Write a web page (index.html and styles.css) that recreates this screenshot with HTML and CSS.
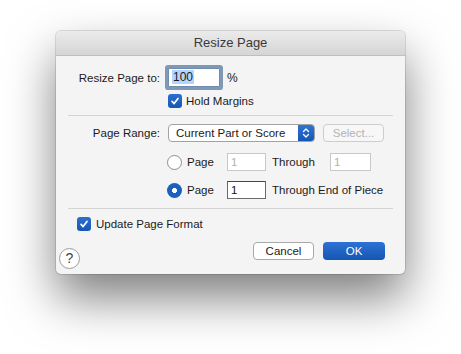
FILE: index.html
```html
<!DOCTYPE html>
<html lang="en">
<head>
    <meta charset="UTF-8">
    <title>Resize Page</title>
    <link rel="stylesheet" href="styles.css">
</head>
<body>

    <div class="window">
        <div class="titlebar">Resize Page</div>

        <div class="content">
            <div class="row row-size">
                <label class="label">Resize Page to:</label>
                <div class="controls">
                    <span class="field field-focus"><span class="sel">100</span></span>
                    <span class="unit">%</span>
                </div>
            </div>

            <div class="row row-check">
                <span></span>
                <div class="controls">
                    <span class="checkbox">
                        <svg width="10" height="10" viewBox="0 0 10 10"><path d="M2 5.3 L4.1 7.6 L8 2.4" fill="none" stroke="#fff" stroke-width="1.7" stroke-linecap="round" stroke-linejoin="round"/></svg>
                    </span>
                    <span>Hold Margins</span>
                </div>
            </div>

            <hr class="sep sep-1">

            <div class="row row-range">
                <label class="label">Page Range:</label>
                <div class="controls">
                    <span class="popup">
                        <span class="popup-text">Current Part or Score</span>
                        <span class="popup-arrows">
                            <svg width="8" height="12" viewBox="0 0 8 12"><path d="M1.5 4.5 L4 2 L6.5 4.5 M1.5 7.5 L4 10 L6.5 7.5" fill="none" stroke="#fff" stroke-width="1.3" stroke-linecap="round" stroke-linejoin="round"/></svg>
                        </span>
                    </span>
                    <span class="btn btn-disabled">Select...</span>
                </div>
            </div>

            <div class="row row-radio row-radio-1">
                <span></span>
                <div class="controls">
                    <span class="radio"></span>
                    <span class="radio-label">Page</span>
                    <span class="field field-small field-disabled">1</span>
                    <span class="through">Through</span>
                    <span class="field field-small2 field-disabled">1</span>
                </div>
            </div>

            <div class="row row-radio row-radio-2">
                <span></span>
                <div class="controls">
                    <span class="radio radio-on"></span>
                    <span class="radio-label">Page</span>
                    <span class="field field-small field-dark">1</span>
                    <span class="through">Through End of Piece</span>
                </div>
            </div>

            <hr class="sep sep-2">

            <div class="row-update">
                <span class="checkbox">
                    <svg width="10" height="10" viewBox="0 0 10 10"><path d="M2 5.3 L4.1 7.6 L8 2.4" fill="none" stroke="#fff" stroke-width="1.7" stroke-linecap="round" stroke-linejoin="round"/></svg>
                </span>
                <span>Update Page Format</span>
            </div>
        </div>

        <div class="footer">
            <span class="help">?</span>
            <span class="spacer"></span>
            <span class="btn btn-cancel">Cancel</span>
            <span class="btn btn-ok">OK</span>
        </div>
    </div>

</body>
</html>
```

FILE: styles.css
```css
html {
    background-color: #fff;
}
body {
    margin: 0;
    padding: 31px 0 0 56px;
    height: 354px;
    box-sizing: border-box;
    font-family: "Liberation Sans", Arial, sans-serif;
    font-size: 11.5px;
    color: #1b1b1b;
}
.window {
    width: 349px;
    height: 243px;
    background-color: #f4f4f4;
    border-radius: 5px;
    box-shadow: 0 24px 48px rgba(0, 0, 0, 0.5), 0 0 0 1px rgba(0, 0, 0, 0.12);
    overflow: hidden;
}
.titlebar {
    height: 24px;
    line-height: 24px;
    text-align: center;
    font-size: 13px;
    color: #3a3a3a;
    background: linear-gradient(#ebebeb, #d5d5d5);
    border-bottom: 1px solid #bfbfbf;
}
.content {
    padding: 0 12px;
}
.row {
    display: grid;
    grid-template-columns: 92px auto;
    column-gap: 8px;
    align-items: center;
}
.label {
    text-align: right;
}
.controls {
    display: flex;
    align-items: center;
}
.row-size {
    margin-top: 12px;
    height: 19px;
}
.row-check {
    margin-top: 6px;
    height: 16px;
}
.row-check .checkbox {
    margin-right: 4px;
}
.sep {
    border: none;
    border-top: 1px solid #d4d4d4;
    margin: 0;
}
.sep-1 {
    margin-top: 6px;
}
.sep-2 {
    margin-top: 9px;
}
.row-range {
    margin-top: 8px;
    height: 18px;
}
.row-radio-1 {
    margin-top: 11px;
    height: 18px;
}
.row-radio-2 {
    margin-top: 10px;
    height: 18px;
}
.row-update {
    margin-top: 7px;
    margin-left: 9px;
    height: 16px;
    display: flex;
    align-items: center;
}
.row-update .checkbox {
    margin-right: 5px;
}

.field {
    box-sizing: border-box;
    display: inline-block;
    background-color: #fff;
    border: 1px solid #a8a8a8;
    height: 18px;
    line-height: 16px;
    padding: 0 3px;
}
.field-focus {
    width: 52px;
    height: 19px;
    line-height: 17px;
    border-color: #6f8dac;
    box-shadow: 0 0 0 3px #7f98b5;
    border-radius: 1px;
    margin-right: 7px;
}
.sel {
    background-color: #b4d5fe;
    padding: 0 1px;
    font-size: 12px;
}
.unit {
    font-size: 12px;
}
.checkbox {
    box-sizing: border-box;
    display: inline-flex;
    align-items: center;
    justify-content: center;
    width: 14px;
    height: 14px;
    border-radius: 3px;
    background: linear-gradient(#2c6fd0, #1557b5);
}

.popup {
    box-sizing: border-box;
    display: flex;
    width: 147px;
    height: 18px;
    border: 1px solid #a2a2a2;
    border-radius: 4px;
    background-color: #fff;
    overflow: hidden;
}
.popup-text {
    flex: 1;
    padding-left: 7px;
    line-height: 16px;
}
.popup-arrows {
    width: 16px;
    display: flex;
    align-items: center;
    justify-content: center;
    background: linear-gradient(#2f74d6, #1556b4);
}
.btn {
    box-sizing: border-box;
    display: inline-flex;
    align-items: center;
    justify-content: center;
    height: 18px;
    border-radius: 4px;
}
.btn-disabled {
    width: 61px;
    margin-left: 8px;
    border: 1px solid #cdcdcd;
    background-color: #f7f7f7;
    color: #b3b3b3;
}

.radio {
    box-sizing: border-box;
    width: 15px;
    height: 15px;
    border-radius: 50%;
    border: 1px solid #8e8e8e;
    background-color: #fff;
    margin-left: -1px;
}
.radio-on {
    border: none;
    background: radial-gradient(circle, #fff 0 2.2px, #1b5fbf 2.8px);
}
.radio-label {
    margin-left: 5px;
    width: 40px;
}
.field-small {
    width: 39px;
}
.field-small2 {
    width: 41px;
}
.field-disabled {
    color: #b0b0b0;
    border-color: #c8c8c8;
}
.field-dark {
    border-color: #6a6a6a;
    border-top-color: #444;
    color: #111;
}
.through {
    margin-left: 6px;
    width: 58px;
}
.row-radio-2 .through {
    width: auto;
}

.footer {
    display: flex;
    align-items: flex-start;
    padding: 0 20px 0 3px;
    margin-top: 10px;
}
.help {
    box-sizing: border-box;
    width: 21px;
    height: 21px;
    margin-top: 6px;
    border-radius: 50%;
    border: 1px solid #9c9c9c;
    background-color: #fff;
    text-align: center;
    line-height: 19px;
    font-size: 14px;
    color: #444;
}
.spacer {
    flex: 1;
}
.btn-cancel {
    width: 61px;
    border: 1px solid #a9a9a9;
    background-color: #fff;
}
.btn-ok {
    width: 62px;
    margin-left: 9px;
    color: #fff;
    background: linear-gradient(#2d72d4, #1656b3);
}
```
